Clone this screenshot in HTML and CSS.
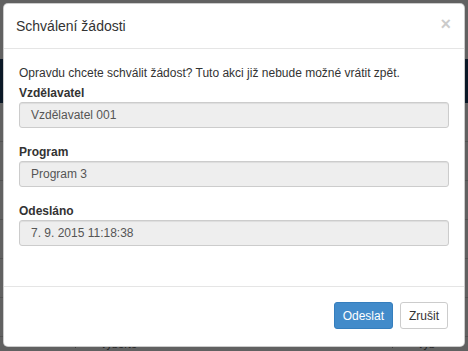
FILE: index.html
```html
<!DOCTYPE html>
<html lang="cs">
<head>
    <meta charset="UTF-8">
    <title>Schválení žádosti</title>
    <link rel="stylesheet" href="styles.css">
</head>
<body>
<div class="page">
  <div class="page-top"></div>
  <div class="page-band"></div>
  <div class="page-rows">
    <div class="page-row"></div>
    <div class="page-row"></div>
    <div class="page-row"></div>
    <div class="page-row"></div>
    <div class="page-row"></div>
    <div class="page-row"></div>
  </div>
  <div class="page-bottom">
    <span class="caret">&#9660;</span><span class="sel">vyberte</span>
    <span class="caret right-caret">&#9660;</span><span class="sel">vyb</span>
  </div>
</div>

<div class="backdrop"></div>

<div class="modal">
  <div class="modal-header">
    <h4 class="modal-title">Schválení žádosti</h4>
    <button type="button" class="close">&times;</button>
  </div>
  <div class="modal-body">
    <p class="intro">Opravdu chcete schválit žádost? Tuto akci již nebude možné vrátit zpět.</p>
    <div class="form-group">
      <label>Vzdělavatel</label>
      <div class="form-control">Vzdělavatel 001</div>
    </div>
    <div class="form-group">
      <label>Program</label>
      <div class="form-control">Program 3</div>
    </div>
    <div class="form-group">
      <label>Odesláno</label>
      <div class="form-control">7. 9. 2015 11:18:38</div>
    </div>
  </div>
  <div class="modal-footer">
    <button type="button" class="btn btn-primary">Odeslat</button>
    <button type="button" class="btn btn-default">Zrušit</button>
  </div>
</div>
</body>
</html>
```

FILE: styles.css
```css
html, body {
  margin: 0;
  padding: 0;
}

body {
  width: 468px;
  height: 351px;
  overflow: hidden;
  position: relative;
  font-family: "Liberation Sans", Arial, sans-serif;
  font-size: 12px;
  color: #333;
  background: #fff;
}

/* page behind the backdrop */
.page {
  height: 351px;
  display: flex;
  flex-direction: column;
}

.page-top {
  height: 61px;
}

.page-band {
  height: 45px;
  background: #1f3f66;
}

.page-rows {
  flex: 1;
  display: flex;
  flex-direction: column;
}

.page-row {
  height: 38px;
  border-bottom: 1px solid #d8d8d8;
}

.page-bottom {
  height: 14px;
  display: flex;
  align-items: center;
  font-size: 11px;
  color: #555;
  padding-left: 60px;
  white-space: nowrap;
}

.caret {
  font-size: 7px;
  padding-right: 8px;
  border-right: 1px solid #999;
}

.sel {
  padding-left: 25px;
}

.right-caret {
  margin-left: 240px;
}

.backdrop {
  position: absolute;
  inset: 0;
  background: rgba(0, 0, 0, 0.62);
}

/* modal */
.modal {
  position: absolute;
  top: 3px;
  left: 3px;
  width: 460px;
  height: 342px;
  background: #fff;
  border: 1px solid rgba(0, 0, 0, 0.2);
  border-radius: 5px;
  display: flex;
  flex-direction: column;
}

.modal-header {
  height: 44px;
  border-bottom: 1px solid #e5e5e5;
  display: flex;
  align-items: center;
  justify-content: space-between;
  padding: 0 13px 0 12px;
}

.modal-title {
  margin: 0;
  font-size: 14px;
  font-weight: normal;
  color: #333;
}

.close {
  border: 0;
  background: none;
  padding: 0;
  font-family: "Liberation Sans", Arial, sans-serif;
  font-size: 18px;
  font-weight: bold;
  line-height: 1;
  color: #000;
  opacity: 0.2;
  margin-top: -4px;
}

.modal-body {
  flex: 1;
  padding: 16px 15px 0 15px;
}

.intro {
  margin: 0 0 3px 0;
  line-height: 17px;
}

.form-group {
  margin-bottom: 16px;
}

.form-group label {
  display: block;
  font-weight: bold;
  font-size: 12px;
  line-height: 17px;
}

.form-control {
  height: 24px;
  line-height: 24px;
  padding: 0 11px;
  background: #eee;
  border: 1px solid #ccc;
  border-radius: 3px;
  box-shadow: inset 0 1px 1px rgba(0, 0, 0, 0.075);
  color: #555;
  font-size: 12px;
}

.modal-footer {
  height: 60px;
  border-top: 1px solid #e5e5e5;
  display: flex;
  justify-content: flex-end;
  align-items: flex-start;
  gap: 7px;
  padding: 15px 16px 0 0;
  box-sizing: border-box;
}

.btn {
  height: 27px;
  padding: 0 8px;
  font-family: "Liberation Sans", Arial, sans-serif;
  font-size: 12px;
  border-radius: 3px;
  border: 1px solid #ccc;
}

.btn-primary {
  background: #428bca;
  border-color: #357ebd;
  color: #fff;
}

.btn-default {
  background: #fff;
  color: #333;
}
```
